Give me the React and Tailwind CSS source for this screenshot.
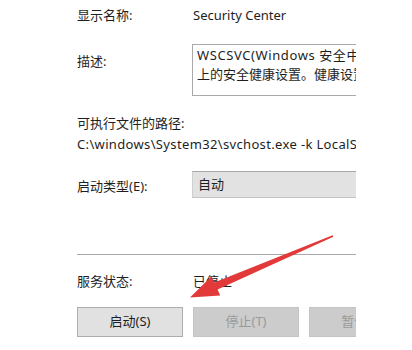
export default function App() {
  const font = { fontFamily: '"Noto Sans", "Noto Sans CJK SC", sans-serif' };
  return (
    <div className="relative w-[412px] h-[350px] bg-white overflow-hidden text-[13px] text-[#1e1e1e]" style={font}>
      <div className="w-[356px] overflow-hidden pl-[77px]">
        <div className="flex items-center h-[32px]">
          <div className="w-[116px] shrink-0">显示名称:</div>
          <div className="whitespace-nowrap">Security Center</div>
        </div>
        <div className="flex mt-[12px]">
          <div className="w-[115px] shrink-0 pt-[8px]">描述:</div>
          <div className="flex-1 h-[52px] border border-[#a9a9a9] border-r-0 bg-white pl-[4px] pt-[1px] leading-[19px] overflow-hidden whitespace-nowrap">
            <div className="tracking-[0.6px]">WSCSVC(Windows 安全中心)服务监视并报告</div>
            <div>上的安全健康设置。健康设置包括防火墙</div>
          </div>
        </div>
        <div className="mt-[18px] h-[18px] leading-[18px]">可执行文件的路径:</div>
        <div className="mt-[3px] h-[18px] leading-[18px] whitespace-nowrap overflow-hidden tracking-[0.35px]">C:\windows\System32\svchost.exe -k LocalServiceNetworkRestricted -p</div>
        <div className="flex items-center mt-[18px]">
          <div className="w-[115px] shrink-0 pt-[4px]">启动类型(E):</div>
          <div className="flex-1 h-[27px] bg-[#e2e2e2] border-t border-b border-l border-t-[#a8a8a8] border-b-[#c4c4c4] border-l-[#d0d0d0] flex items-center pl-[5px]">自动</div>
        </div>
        <div className="mt-[56px] h-px bg-[#a9a9a9]" />
        <div className="flex items-center h-[26px] mt-[14px]">
          <div className="w-[116px] shrink-0">服务状态:</div>
          <div>已停止</div>
        </div>
        <div className="flex gap-[10px] mt-[12px] whitespace-nowrap">
          <div className="w-[106px] h-[30px] shrink-0 bg-[#e1e1e1] border border-[#adadad] flex items-center justify-center">启动(S)</div>
          <div className="w-[106px] h-[30px] shrink-0 bg-[#cccccc] border border-[#c4c4c4] text-[#9a9a9a] flex items-center justify-center">停止(T)</div>
          <div className="w-[106px] h-[30px] shrink-0 bg-[#cccccc] border border-[#c4c4c4] text-[#9a9a9a] flex items-center justify-center">暂停(P)</div>
        </div>
      </div>
      <svg className="absolute left-0 top-0" width="412" height="350" viewBox="0 0 412 350">
        <polygon
          points="333.4,236.8 332.6,235.2 214.2,282.4 211.5,276.2 190,297.5 220.2,295.6 217.6,289.6"
          fill="#e23a3a"
        />
      </svg>
    </div>
  );
}
